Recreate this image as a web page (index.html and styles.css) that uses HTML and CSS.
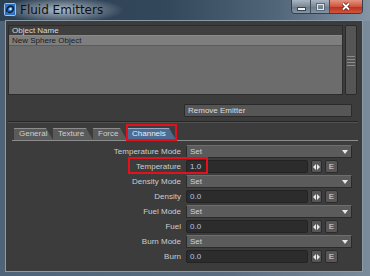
FILE: index.html
```html
<!DOCTYPE html>
<html lang="en">
<head>
    <meta charset="UTF-8">
    <title>Fluid Emitters</title>
    <link rel="stylesheet" href="styles.css">
</head>
<body>

<div class="window">
    <div class="titlebar">
        <svg class="app-icon" viewBox="0 0 12 13">
            <rect x="0.5" y="0.5" width="11" height="12" rx="1" fill="#2f74c4" stroke="#9cc4ea"/>
            <path d="M3 9 C2 6 4 3 7 3 C9 3 10 5 9 7 C8 9 6 10 4 9" fill="none" stroke="#0c1f3a" stroke-width="1.6"/>
            <circle cx="6.5" cy="6" r="1.2" fill="#dfefff"/>
        </svg>
        <span class="title">Fluid Emitters</span>
        <div class="caption">
            <div class="cap-btn cap-min"><span></span></div>
            <div class="cap-btn cap-max"><span></span></div>
            <div class="cap-btn cap-close">
                <svg viewBox="0 0 10 9" width="10" height="9">
                    <path d="M2 1.5 L8 7.5 M8 1.5 L2 7.5" stroke="#5a1a12" stroke-width="3.2"/>
                    <path d="M2 1.5 L8 7.5 M8 1.5 L2 7.5" stroke="#ffffff" stroke-width="1.8"/>
                </svg>
            </div>
        </div>
    </div>

    <div class="client">
        <div class="list-area">
            <div class="list">
                <div class="list-head">Object Name</div>
                <div class="list-row">New Sphere Object</div>
            </div>
            <div class="scrollbar"><div class="grip"></div></div>
        </div>

        <div class="remove-row">
            <button class="btn-remove">Remove Emitter</button>
        </div>

        <div class="separator"></div>

        <div class="tabs">
            <div class="tab">General</div>
            <div class="tab">Texture</div>
            <div class="tab">Force</div>
            <div class="tab active">Channels</div>
            <div class="note note-tab"></div>
        </div>

        <div class="rows">
            <label class="lbl">Temperature Mode</label>
            <div class="select"><span>Set</span><i class="arrow"></i></div>

            <label class="lbl">Temperature</label>
            <div class="num-ctl">
                <div class="num">1.0</div>
                <button class="mini mini-drag"><svg viewBox="0 0 7 6" width="7" height="6"><polygon points="0,3 3,0 3,6" fill="#e8e8e8"/><polygon points="4,0 7,3 4,6" fill="#e8e8e8"/></svg></button>
                <button class="mini mini-e">E</button>
            </div>

            <label class="lbl">Density Mode</label>
            <div class="select"><span>Set</span><i class="arrow"></i></div>

            <label class="lbl">Density</label>
            <div class="num-ctl">
                <div class="num">0.0</div>
                <button class="mini mini-drag"><svg viewBox="0 0 7 6" width="7" height="6"><polygon points="0,3 3,0 3,6" fill="#e8e8e8"/><polygon points="4,0 7,3 4,6" fill="#e8e8e8"/></svg></button>
                <button class="mini mini-e">E</button>
            </div>

            <label class="lbl">Fuel Mode</label>
            <div class="select"><span>Set</span><i class="arrow"></i></div>

            <label class="lbl">Fuel</label>
            <div class="num-ctl">
                <div class="num">0.0</div>
                <button class="mini mini-drag"><svg viewBox="0 0 7 6" width="7" height="6"><polygon points="0,3 3,0 3,6" fill="#e8e8e8"/><polygon points="4,0 7,3 4,6" fill="#e8e8e8"/></svg></button>
                <button class="mini mini-e">E</button>
            </div>

            <label class="lbl">Burn Mode</label>
            <div class="select"><span>Set</span><i class="arrow"></i></div>

            <label class="lbl">Burn</label>
            <div class="num-ctl">
                <div class="num">0.0</div>
                <button class="mini mini-drag"><svg viewBox="0 0 7 6" width="7" height="6"><polygon points="0,3 3,0 3,6" fill="#e8e8e8"/><polygon points="4,0 7,3 4,6" fill="#e8e8e8"/></svg></button>
                <button class="mini mini-e">E</button>
            </div>

            <div class="note note-temp"></div>
        </div>
    </div>
</div>

</body>
</html>
```

FILE: styles.css
```css
* {
    box-sizing: border-box;
}
body {
    margin: 0;
    font-family: "Liberation Sans", Arial, sans-serif;
    font-size: 8px;
}
.window {
    width: 370px;
    height: 276px;
    display: flex;
    flex-direction: column;
    overflow: hidden;
    background: linear-gradient(to right, #4f6479 0%, #5a6d80 60%, #7a8b9b 100%);
}
.titlebar {
    height: 21px;
    flex-shrink: 0;
    display: flex;
    align-items: flex-start;
    background:
        radial-gradient(ellipse 62px 13px at 62px 10px, rgba(215, 226, 236, 0.75), rgba(215, 226, 236, 0) 100%),
        linear-gradient(to right, #2c3f51 0%, #34485c 45%, #52667a 75%, #8495a5 100%);
}
.app-icon {
    width: 12px;
    height: 13px;
    margin: 3px 4px 0 4px;
}
.title {
    font-family: "DejaVu Sans", sans-serif;
    font-size: 12px;
    line-height: 14px;
    margin-top: 3px;
    color: #111;
}
.caption {
    margin-left: auto;
    margin-right: 7px;
    display: flex;
    height: 14px;
    border: 1px solid #33414f;
    border-top: none;
    border-radius: 0 0 4px 4px;
    overflow: hidden;
}
.cap-btn {
    height: 13px;
    display: flex;
    align-items: center;
    justify-content: center;
}
.cap-min,
.cap-max {
    width: 19px;
    background: linear-gradient(#a9b5c1, #7b8a99 50%, #6b7b8b 51%, #8594a3);
    border-right: 1px solid #3f4d5a;
}
.cap-min span {
    width: 7px;
    height: 2px;
    margin-top: 4px;
    background: #f2f2f2;
    box-shadow: 0 0 0 1px #3a4552;
}
.cap-max span {
    width: 7px;
    height: 6px;
    border: 1px solid #dfe4e8;
    box-shadow: 0 0 0 1px #5d6b79;
}
.cap-close {
    width: 32px;
    background: linear-gradient(#e49382, #cf5540 50%, #b92e1c 51%, #d2553c);
}
.client {
    flex: 1;
    margin: 0 8px 5px 6px;
    background: #3c3c3c;
    box-shadow: 0 0 0 1px #8b9aa8;
    display: flex;
    flex-direction: column;
}
.list-area {
    display: flex;
    gap: 2px;
    height: 70px;
    margin: 4px 5px 0 2px;
}
.list {
    flex: 1;
    background: #6c6c6c;
    border: 1px solid #2c2c2c;
}
.list-head {
    height: 10px;
    line-height: 10px;
    padding-left: 3px;
    background: #3f3f3f;
    color: #dadada;
    border-bottom: 1px solid #8a8a8a;
}
.list-row {
    height: 10px;
    line-height: 10px;
    padding-left: 3px;
    background: #7e7e7e;
    color: #1c1c1c;
    border-bottom: 1px solid #5c5c5c;
}
.scrollbar {
    width: 12px;
    background: #555;
    border: 1px solid #2a2a2a;
    border-radius: 2px;
    display: flex;
    align-items: center;
    justify-content: center;
}
.grip {
    width: 8px;
    height: 11px;
    background: repeating-linear-gradient(#8a8a8a 0 1px, transparent 1px 3px);
    margin-top: 2px;
}
.remove-row {
    margin-top: 9px;
    padding-left: 178px;
}
.btn-remove {
    width: 168px;
    height: 13px;
    padding: 0 0 0 3px;
    text-align: left;
    font-family: inherit;
    font-size: 8px;
    color: #dcdcdc;
    background: #565656;
    border: 1px solid #2a2a2a;
    border-radius: 1px;
}
.separator {
    margin: 4px 4px 0 2px;
    border-top: 1px solid #262626;
    border-bottom: 1px solid #525252;
}
.tabs {
    position: relative;
    display: flex;
    margin: 5px 4px 0 6px;
    padding-left: 2px;
    border-bottom: 1px solid #8c8c8c;
}
.tab {
    height: 12px;
    line-height: 12px;
    padding-left: 5px;
    color: #cfcfcf;
    background: linear-gradient(#8d8d8d 0 1px, #5a5a5a 1px);
    clip-path: polygon(0 0, calc(100% - 7px) 0, 100% 100%, 0 100%);
}
.tab:nth-child(1) { width: 39px; }
.tab:nth-child(2) { width: 40px; }
.tab:nth-child(3) { width: 34px; }
.tab:nth-child(4) { width: 49px; }
.tab.active {
    color: #e4ecf6;
    background: linear-gradient(#93a9c4 0 1px, #4e6c92 1px);
}
.rows {
    position: relative;
    display: grid;
    grid-template-columns: 175px 166px;
    grid-auto-rows: 13px;
    column-gap: 5px;
    row-gap: 2px;
    margin-top: 4px;
}
.lbl {
    text-align: right;
    line-height: 13px;
    color: #cdcdcd;
}
.select {
    display: flex;
    align-items: center;
    padding-left: 3px;
    color: #d2d2d2;
    background: #5b5b5b;
    border: 1px solid #2a2a2a;
    border-top-color: #6e6e6e;
}
.arrow {
    margin-left: auto;
    margin-right: 3px;
    border-left: 3px solid transparent;
    border-right: 3px solid transparent;
    border-top: 4px solid #e8e8e8;
}
.num-ctl {
    display: flex;
    gap: 3px;
}
.num {
    width: 122px;
    padding-left: 3px;
    line-height: 11px;
    color: #b6c6e2;
    background: #2c2c2c;
    border: 1px solid #232323;
    border-radius: 2px;
}
.mini {
    height: 13px;
    padding: 0;
    display: flex;
    align-items: center;
    justify-content: center;
    font-family: inherit;
    font-size: 8px;
    color: #dedede;
    background: #575757;
    border: 1px solid #2a2a2a;
    border-radius: 2px;
}
.mini-drag { width: 11px; }
.mini-e { width: 13px; }
.note {
    position: absolute;
    border: 2px solid #e3111b;
}
.note-tab {
    left: 114px;
    top: -4px;
    width: 51px;
    height: 17px;
}
.note-temp {
    left: 122px;
    top: 12px;
    width: 80px;
    height: 17px;
}
```
